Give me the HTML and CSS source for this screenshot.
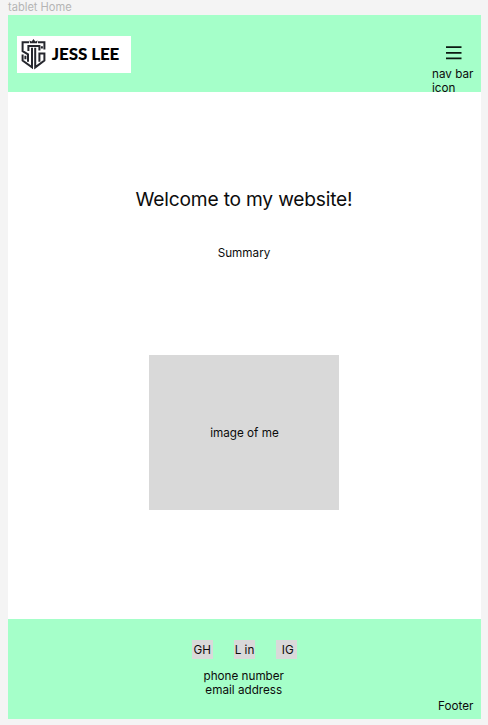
FILE: index.html
```html
<!DOCTYPE html>
<html lang="en">
<head>
<meta charset="utf-8">
<title>Jess Lee</title>
<link rel="stylesheet" href="styles.css">
</head>
<body>
<div class="frame-label">tablet Home</div>
<div class="frame">
  <header class="header">
    <div class="logo">
      <svg class="crest" viewBox="0 0 26 32" width="26" height="32" aria-hidden="true">
        <path class="crown" d="M9 4.2 8.4 1.4 10.7 2.4 12.5 0 14.3 2.4 16.6 1.4 16 4.2Z"/>
        <path class="line" d="M8 3.3H1.6V12.2L7 15.4V22.8M1.6 15.4V21.6L11 28.4V8.8M17 3.3H23.4V10.4M14.2 8.8V28.4L23.4 21.6V14.4H18.4V22.8"/>
        <path class="line" d="M7.4 12V6.9H18.4V11.6M4.4 16.8V20.2M20.9 7.2V9.6"/>
      </svg>
      <span class="logo-name">JESS LEE</span>
    </div>
    <nav class="nav">
      <svg class="menu" viewBox="0 0 16 14" width="16" height="14" aria-hidden="true">
        <path d="M0 1.2H15.5M0 6.9H15.5M0 12.4H15.5"/>
      </svg>
      <span class="nav-text">nav bar<br>icon</span>
    </nav>
  </header>
  <main class="main">
    <h1 class="title">Welcome to my website!</h1>
    <p class="summary">Summary</p>
    <div class="photo">image of me</div>
  </main>
  <footer class="footer">
    <div class="links">
      <span class="link">GH</span>
      <span class="link">L in</span>
      <span class="link link-ig">IG</span>
    </div>
    <p class="contact">phone number<br>email address</p>
    <span class="footer-label">Footer</span>
  </footer>
</div>
</body>
</html>
```
FILE: styles.css
```css
* { box-sizing: border-box; }
body {
  margin: 0;
  height: 725px;
  padding-left: 8px;
  background: #f4f4f4;
  color: #0c0c0c;
  font: 11.7px/14px Inter, sans-serif;
  overflow: hidden;
}
.frame-label { height: 15px; font-size: 11.1px; line-height: 14px; color: #b5b5b5; }
.frame { width: 473px; height: 703.5px; display: flex; flex-direction: column; background: #fff; }
.header {
  height: 77px;
  display: flex;
  justify-content: space-between;
  align-items: flex-start;
  padding: 21px 6px 0 9.3px;
  background: #a5ffc9;
}
.logo {
  width: 113.4px;
  height: 37.3px;
  display: flex;
  align-items: flex-start;
  padding: 3px 0 0 4px;
  background: #fff;
}
.crest { flex: none; }
.crown { fill: #25262d; }
.line { fill: none; stroke: #25262d; stroke-width: 2; }
.logo-name {
  margin: 5px 0 0 4.5px;
  font: 900 17px/20px Lato, sans-serif;
  letter-spacing: -0.1px;
  color: #000;
  white-space: nowrap;
}
.nav { width: 43px; padding-top: 9.5px; }
.menu { display: block; margin-left: 13.6px; }
.menu path { fill: none; stroke: #0b1a11; stroke-width: 1.8; }
.nav-text { display: block; margin-top: 7.5px; white-space: nowrap; }
.main { height: 527px; display: flex; flex-direction: column; align-items: center; padding-right: 1px; }
.title { margin: 95px 0 0; font-size: 19.2px; line-height: 24px; font-weight: 400; letter-spacing: -0.2px; }
.summary { margin: 35px 0 0; }
.photo {
  width: 190px;
  height: 154.5px;
  margin-top: 95.3px;
  padding-left: 1px;
  display: flex;
  align-items: center;
  justify-content: center;
  background: #d9d9d9;
}
.footer {
  flex: 1;
  display: flex;
  flex-direction: column;
  align-items: center;
  padding-top: 21px;
  background: #a5ffc9;
}
.links { display: flex; gap: 21px; }
.link {
  width: 21.3px;
  height: 19px;
  display: flex;
  align-items: center;
  justify-content: center;
  white-space: nowrap;
  background: #d9d9d9;
}
.link-ig { padding-left: 2px; }
.contact { margin: 10px 1.5px 0 0; text-align: center; }
.footer-label { align-self: flex-end; margin: 2px 7.5px 0 0; }
```
